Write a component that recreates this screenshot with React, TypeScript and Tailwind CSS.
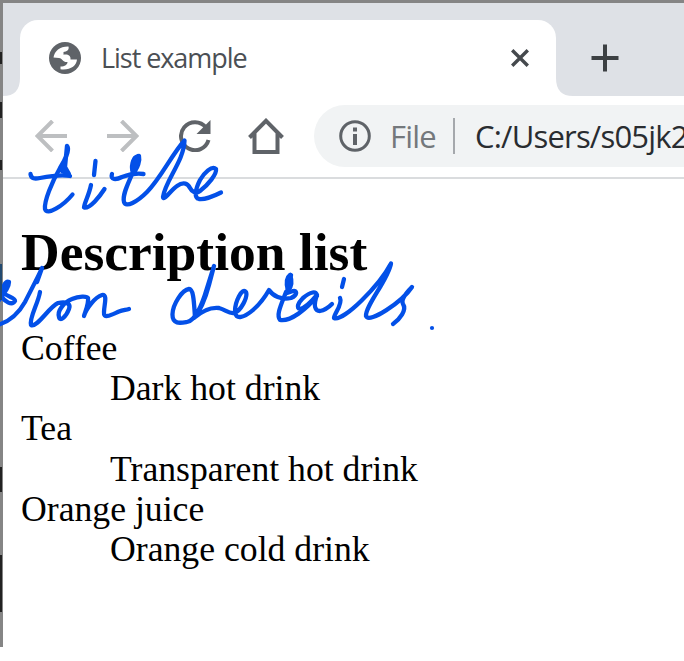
import React from "react";

const items = [
  { term: "Coffee", detail: "Dark hot drink" },
  { term: "Tea", detail: "Transparent hot drink" },
  { term: "Orange juice", detail: "Orange cold drink" },
];

function TabStrip() {
  return (
    <div className="flex h-[93px] shrink-0 items-end bg-[#dee1e6]">
      <svg className="h-[18px] w-[17px] shrink-0" viewBox="0 0 17 18">
        <path d="M0 18Q17 18 17 0V18Z" fill="#fff" />
      </svg>
      <div className="flex h-[76px] w-[536px] shrink-0 items-center rounded-t-[18px] bg-white pl-[29px] pr-[27px]">
        <svg className="h-8 w-8 shrink-0" viewBox="0 0 32 32">
          <circle cx="16" cy="16" r="16" fill="#5f6368" />
          <path
            d="M4.500 15.500C5.500 9 11 4.300 19.500 4.500C20.500 8 17.500 9.500 14.500 10V12.800C19 12 22 14 21.500 17.500H28C27.500 24 21 28.500 11.500 27.300V24.500C16 24.500 18.500 22.500 18.500 20C14 20.500 13.500 16.500 10 16Z"
            fill="#fff"
          />
        </svg>
        <span className="ml-5 whitespace-nowrap pb-px font-['Open_Sans',sans-serif] text-[27px] leading-[34px] tracking-[-1.05px] text-[#4b4f54]">
          List example
        </span>
        <svg className="ml-auto h-[18px] w-[18px]" viewBox="0 0 18 18" fill="none" stroke="#45494d" strokeWidth="3.400">
          <path d="M1.200 1.200 16.800 16.800M16.800 1.200 1.200 16.800" />
        </svg>
      </div>
      <svg className="h-[18px] w-[17px] shrink-0" viewBox="0 0 17 18">
        <path d="M17 18Q0 18 0 0V18Z" fill="#fff" />
      </svg>
      <svg className="mb-[24px] ml-[18px] h-7 w-7 shrink-0" viewBox="0 0 28 28" stroke="#3c4043" strokeWidth="4">
        <path d="M0.500 14H27.500M14 0.500V27.500" />
      </svg>
    </div>
  );
}

function Toolbar() {
  return (
    <div className="flex h-[83px] shrink-0 items-center overflow-hidden border-b-2 border-[#dadcde] pl-[32px]">
      <svg className="mb-0.5 h-8 w-8 shrink-0" viewBox="0 0 32 32" fill="none" stroke="#bdbfc1" strokeWidth="4">
        <path d="M32 16H3M17.500 1 2.500 16 17.500 31" />
      </svg>
      <svg className="mb-0.5 ml-[40px] h-8 w-8 shrink-0" viewBox="0 0 32 32" fill="none" stroke="#bdbfc1" strokeWidth="4">
        <path d="M0 16H29M14.500 1 29.500 16 14.500 31" />
      </svg>
      <svg className="mb-0.5 ml-[40px] h-8 w-8 shrink-0" viewBox="0 0 32 32">
        <path d="M29.500 20A14 14 0 1 1 27 7.500" fill="none" stroke="#5f6368" strokeWidth="4" />
        <path d="M31.500 0V14H17.500Z" fill="#5f6368" />
      </svg>
      <svg className="mb-0.5 ml-[37px] h-9 w-9 shrink-0" viewBox="0 0 36 36" fill="none" stroke="#5f6368" strokeWidth="4">
        <path d="M1.500 19.500 18 2.800 34.500 19.500M6.500 15V34H29.500V15" />
      </svg>
      <div className="mb-px ml-[30px] flex h-[62px] w-[400px] shrink-0 items-center rounded-l-full bg-[#f1f3f4] pl-[25px]">
        <svg className="h-8 w-8 shrink-0" viewBox="0 0 32 32">
          <circle cx="16" cy="16" r="14.300" fill="none" stroke="#5f6368" strokeWidth="3" />
          <path d="M14 7.500H18V11.500H14ZM14 14H18V25H14Z" fill="#5f6368" />
        </svg>
        <span className="ml-[19px] w-[46px] whitespace-nowrap font-['Open_Sans',sans-serif] text-[31px] leading-10 tracking-[-0.8px] text-[#74787c]">
          File
        </span>
        <span className="ml-[17px] h-[36px] w-[2px] shrink-0 bg-[#a5a8ac]" />
        <span className="ml-[20px] whitespace-nowrap font-['Open_Sans',sans-serif] text-[31px] leading-10 tracking-[-0.8px] text-[#292c30]">
          C:/Users/s05jk2
        </span>
      </div>
    </div>
  );
}

function InkNotes() {
  return (
    <svg
      className="pointer-events-none absolute left-0 top-0 h-[661px] w-[684px]"
      viewBox="0 0 684 661"
      fill="none"
      stroke="#0350e8"
      strokeWidth="4.300"
      strokeLinecap="round"
      strokeLinejoin="round"
    >
      <path d="M30.500 174C31 179 35 179 40 178C50 176 61 174 70 176" />
      <path d="M67 146C70 149 65 160 60 168C52 182 44 201 45 209C47 216 63 206 72.500 194.500M67 146L65 167L69 174L62 171L66 156" />
      <path d="M95.500 161L94 175M91 185C89 195 84 204 84 207.500C90 209 100 196 104.500 189" />
      <path d="M112 174C110 180 116 180 122 177C130 174 136 173 143.500 174" />
      <path d="M138 156C132 158 131 168 133 172C138 169 140 160 139 156C137 162 135 168 133 172C128 184 122 195 124 202C126 208 137 202 147 192C161 178 172 154 184.500 140.500C184 161 165 181 163 197C163 202 171 190 177 186C184 181 188 184 190 188C192 192 196 194 200 191C208 185 217 174 216 169C212 165 204 173 200 180C195 190 194 198 199 199C206 200 214 196 221 192.500" />
      <path d="M136 159L134 170" strokeWidth="7" />
      <path d="M-1 300C4 294 9 286 9 282C5 280 2 288 4 293C7 297 15 297 15 301C12 306 5 302 1 296" />
      <path d="M-2 325C11 321 20 311 25 302C31 290 38 277 42 268L37 282" />
      <path d="M40 292C38 304 29 318 31 325C37 328 49 307 58 303C67 301 71 304 69 309C66 317 60 322 59 317C57 311 64 302 72 299C79 296 87 296 88 298C89 304 85 312 84 316C86 309 95 297 102 295C108 294 104 305 104 312C103 320 113 314 119 311.500C123 310 126 310 129 309" />
      <path d="M195 317C194 305 194 289 189 289C182 290 173 304 172.500 314C172 325 181 323 187 322C196 320 202 305 207 288L214 266L209 285C205 300 201 310 194 318C203 310 210 307 219 308C226 310 229 314 234 313C241 311 248 297 246 292C242 287 235 302 235 311C235 321 245 317 253 310C260 304 265 297 269 290C273 296 281 300 291 298C298 295 297 290 293 291L287 293L291 275" />
      <path d="M290 275C286 278 286 284 288 291C292 286 292 280 290 275M286 292C281 305 276 315 280 320C290 322 307 309 317 296C317 290 310 292 303 298C298 303 296 308 300 309C306 308 312 301 317 295C313 306 315 311 320 311C326 310 329 307 332 304" />
      <path d="M344 279L342 287M340 298C343 304 334 314 334 318C343 322 379 286 391 263.500C388 280 365 306 366 316C369 324 402 302 412 287C405 294 401 300 403 304C407 310 400 319 393 324" />
      <circle cx="432" cy="328" r="2.100" fill="#0350e8" stroke="none" />
    </svg>
  );
}

export default function App() {
  return (
    <main className="relative flex h-[661px] w-[684px] flex-col overflow-hidden bg-white">
      <section className="flex h-[647px] flex-col border-l-[3px] border-t-[3px] border-[#858585]">
        <TabStrip />
        <Toolbar />
        <article className="pl-[18px] pt-[43px] font-['Liberation_Serif',serif] text-black">
          <h2 className="whitespace-nowrap text-[53.500px] font-bold leading-[60px]">Description list</h2>
          <dl className="mt-[46px] text-[35.700px] leading-[40.200px]">
            {items.map(({ term, detail }) => (
              <React.Fragment key={term}>
                <dt>{term}</dt>
                <dd className="pl-[89px]">{detail}</dd>
              </React.Fragment>
            ))}
          </dl>
        </article>
      </section>
      <InkNotes />
      {/* Sliver of the window behind, visible along the left edge */}
      <svg className="pointer-events-none absolute left-0 top-0 h-[647px] w-[3px]" viewBox="0 0 3 647" fill="#222">
        <path d="M0 52H2V64H0ZM0 102H2V118H0ZM0 160H2V170H0ZM0 467H2V492H0ZM0 555H2V612H0Z" />
        <path d="M0 264H2V300H0Z" fill="#234a70" />
      </svg>
    </main>
  );
}
